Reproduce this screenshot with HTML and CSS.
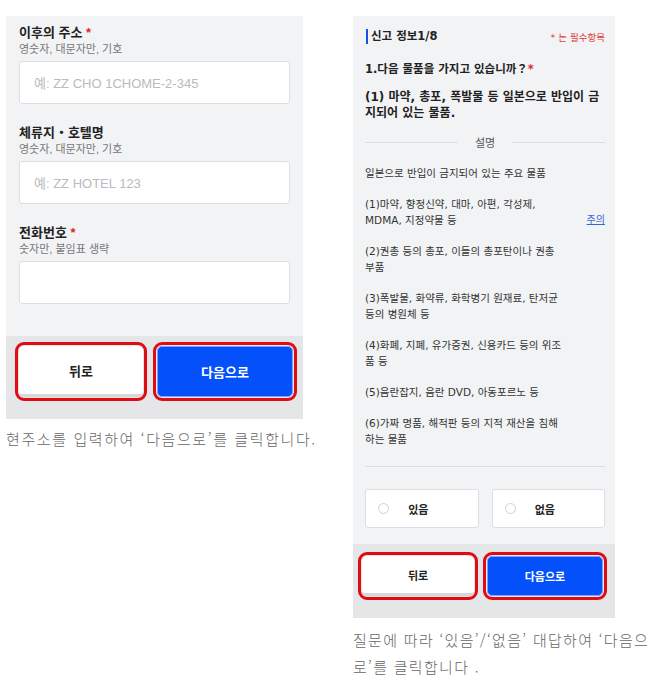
FILE: index.html
```html
<!DOCTYPE html>
<html lang="ko">
<head>
<meta charset="utf-8">
<title>입력 안내</title>
<link rel="stylesheet" href="styles.css">
</head>
<body>
<div class="page">
  <div class="col col-left">
    <div class="panel panel-left">
      <div class="form">
        <div class="field">
          <div class="label">이후의 주소 <span class="req">*</span></div>
          <div class="hint">영숫자, 대문자만, 기호</div>
          <div class="input"><span class="ph">예: ZZ CHO 1CHOME-2-345</span></div>
        </div>
        <div class="field">
          <div class="label">체류지・호텔명</div>
          <div class="hint">영숫자, 대문자만, 기호</div>
          <div class="input"><span class="ph">예: ZZ HOTEL 123</span></div>
        </div>
        <div class="field">
          <div class="label">전화번호 <span class="req">*</span></div>
          <div class="hint">숫자만, 붙임표 생략</div>
          <div class="input"></div>
        </div>
      </div>
      <div class="bar bar-left">
        <div class="btn btn-back">뒤로</div>
        <div class="btn btn-next">다음으로</div>
      </div>
    </div>
    <p class="caption">현주소를 입력하여 ‘다음으로’를 클릭합니다.</p>
  </div>

  <div class="col col-right">
    <div class="panel panel-right">
      <div class="form form-right">
        <div class="head">
          <div class="head-title">신고 정보1/8</div>
          <div class="head-note">* 는 필수항목</div>
        </div>
        <div class="q1">1.다음 물품을 가지고 있습니까？<span class="req">*</span></div>
        <div class="q2">(1) 마약, 총포, 폭발물 등 일본으로 반입이 금지되어 있는 물품.</div>
        <div class="divider"><span>설명</span></div>
        <p class="desc">일본으로 반입이 금지되어 있는 주요 물품</p>
        <div class="item-row">
          <p class="desc item">(1)마약, 향정신약, 대마, 아편, 각성제, MDMA, 지정약물 등</p>
          <a class="note-link">주의</a>
        </div>
        <p class="desc item">(2)권총 등의 총포, 이들의 총포탄이나 권총 부품</p>
        <p class="desc item">(3)폭발물, 화약류, 화학병기 원재료, 탄저균 등의 병원체 등</p>
        <p class="desc item">(4)화폐, 지폐, 유가증권, 신용카드 등의 위조품 등</p>
        <p class="desc item">(5)음란잡지, 음란 DVD, 아동포르노 등</p>
        <p class="desc item">(6)가짜 명품, 해적판 등의 지적 재산을 침해하는 물품</p>
        <div class="rule"></div>
        <div class="choices">
          <div class="choice"><span class="radio"></span><span class="choice-label">있음</span></div>
          <div class="choice"><span class="radio"></span><span class="choice-label">없음</span></div>
        </div>
      </div>
      <div class="bar bar-right">
        <div class="btn btn-back">뒤로</div>
        <div class="btn btn-next">다음으로</div>
      </div>
    </div>
    <p class="caption caption-right">질문에 따라 ‘있음’/‘없음’ 대답하여 ‘다음으로’를 클릭합니다 .</p>
  </div>
</div>
</body>
</html>
```

FILE: styles.css
```css
* { box-sizing: border-box; }

body {
  margin: 0;
  background: #ffffff;
  font-family: "Liberation Sans", "Noto Sans CJK KR", sans-serif;
  color: #222;
}

.page {
  display: flex;
  align-items: flex-start;
  gap: 27px;
  padding: 16px 0 0 6px;
}

.col-left { width: 320px; }
.col-right { width: 305px; }

.panel { background: #f2f3f5; }
.panel-left { width: 297px; }
.panel-right { width: 262px; }

/* left form */
.form { padding: 9px 13px 32px 13px; }

.field + .field { margin-top: 21px; }

.label {
  font-size: 13px;
  line-height: 16px;
  font-weight: 700;
  color: #222;
}
.req { color: #e3262b; font-weight: 700; }

.hint {
  font-size: 11px;
  line-height: 16px;
  color: #777;
  margin-bottom: 4px;
}

.input {
  height: 43px;
  background: #fff;
  border: 1px solid #dcdee1;
  border-radius: 3px;
  padding-left: 14px;
  display: flex;
  align-items: center;
}
.ph { font-size: 13px; color: #b8bbbf; }

/* bottom bars */
.bar {
  background: #e5e6e8;
  display: flex;
}
.bar-left { padding: 10px 10px 22px 13px; gap: 14px; }
.bar-left .btn { height: 51px; }
.bar-left .btn-back { flex: 0 0 124px; }
.bar-left .btn-next { flex: 1; }

.bar-right { padding: 12px 12px 22px 9px; gap: 13px; }
.bar-right .btn { height: 40px; font-size: 11px; }
.bar-right .btn-back { flex: 0 0 112px; }
.bar-right .btn-next { flex: 1; }

.btn {
  display: flex;
  align-items: center;
  justify-content: center;
  font-size: 13px;
  font-weight: 700;
  border-radius: 5px;
  outline: 3px solid #e10b14;
  outline-offset: 1px;
}
.btn-back {
  background: #fff;
  color: #222;
  border-bottom: 3px solid #d6d7d9;
}
.btn-next {
  background: #0451fb;
  color: #fff;
  border: 1px solid #7ea2f5;
}

.caption {
  margin: 6px 0 0 0;
  font-size: 15px;
  line-height: 27px;
  color: #666;
  font-weight: 300;
  letter-spacing: 1.6px;
  font-family: "Noto Sans CJK KR", sans-serif;
}
.caption-right { margin-top: 8px; width: 305px; letter-spacing: 1.3px; }

/* right form */
.form-right {
  padding: 13px 10px 16px 12px;
  font-family: "DejaVu Sans", "Noto Sans CJK KR", sans-serif;
}

.head {
  display: flex;
  justify-content: space-between;
  align-items: center;
  height: 15px;
}
.head-title {
  font-size: 11.5px;
  font-weight: 700;
  border-left: 2px solid #1652e8;
  padding-left: 3px;
  line-height: 15px;
  margin-left: 1px;
}
.head-note {
  font-size: 9.5px;
  color: #e0383a;
}

.q1 {
  margin-top: 17px;
  font-size: 11.5px;
  font-weight: 700;
  line-height: 16px;
}

.q2 {
  margin-top: 12px;
  font-size: 12px;
  font-weight: 700;
  line-height: 16px;
}

.divider {
  display: flex;
  align-items: center;
  gap: 14px;
  margin-top: 13px;
  font-size: 11px;
  color: #555;
  font-family: "Noto Sans CJK KR", sans-serif;
}
.divider::before,
.divider::after {
  content: "";
  flex: 1;
  height: 1px;
  background: #dcdde0;
}
.divider span { padding: 0 3px; }

.desc {
  margin: 15px 0 0 0;
  font-size: 10.5px;
  line-height: 16px;
  color: #333;
}
.item { margin-top: 15px; width: 201px; }

.item-row {
  display: flex;
  align-items: flex-end;
  justify-content: space-between;
}
.note-link {
  font-size: 10px;
  line-height: 16px;
  color: #3767d6;
  text-decoration: underline;
}

.rule {
  margin-top: 19px;
  height: 1px;
  background: #dcdde0;
}

.choices {
  display: flex;
  gap: 13px;
  margin-top: 22px;
}
.choice {
  flex: 1;
  height: 39px;
  background: #fff;
  border: 1px solid #dcdee1;
  border-radius: 3px;
  display: flex;
  align-items: center;
  padding-left: 12px;
}
.radio {
  width: 11px;
  height: 11px;
  border: 1px solid #cfd1d4;
  border-radius: 50%;
  background: #fff;
}
.choice-label {
  flex: 1;
  text-align: center;
  font-size: 11px;
  font-weight: 700;
  padding-right: 30px;
}
```
